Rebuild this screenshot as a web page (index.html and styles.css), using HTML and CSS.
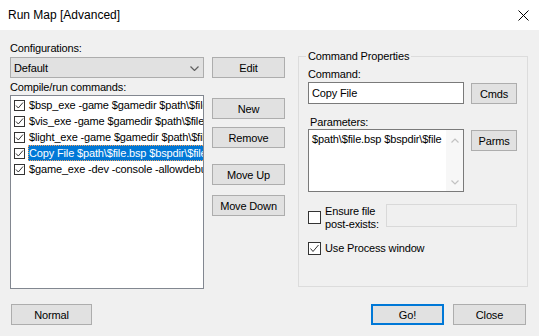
FILE: index.html
```html
<!DOCTYPE html>
<html>
<head>
<meta charset="utf-8">
<link rel="stylesheet" href="styles.css">
</head>
<body>
<div class="window">
  <div class="titlebar">
    <span class="title">Run Map [Advanced]</span>
    <svg class="close-x" width="11" height="11" viewBox="0 0 11 11"><path d="M0.5 0.5 L10.5 10.5 M10.5 0.5 L0.5 10.5" stroke="#000" stroke-width="1" fill="none"/></svg>
  </div>
  <div class="client">
    <div class="top">
      <div class="left">
        <div class="label">Configurations:</div>
        <div class="combo">
          <span>Default</span>
          <svg width="9" height="5" viewBox="0 0 9 5"><path d="M0.5 0.5 L4.5 4.5 L8.5 0.5" stroke="#606060" stroke-width="1.2" fill="none"/></svg>
        </div>
        <div class="label label-2">Compile/run commands:</div>
        <div class="listbox">
          <div class="row"><svg class="lcb" width="11" height="11" viewBox="0 0 11 11"><rect x="0.5" y="0.5" width="10" height="10" fill="#fff" stroke="#333"/><path d="M2 5.5 L4.3 8 L9 2.5" stroke="#333" stroke-width="1" fill="none"/></svg><span class="rt">$bsp_exe -game $gamedir $path\$file</span></div>
          <div class="row"><svg class="lcb" width="11" height="11" viewBox="0 0 11 11"><rect x="0.5" y="0.5" width="10" height="10" fill="#fff" stroke="#333"/><path d="M2 5.5 L4.3 8 L9 2.5" stroke="#333" stroke-width="1" fill="none"/></svg><span class="rt">$vis_exe -game $gamedir $path\$file</span></div>
          <div class="row"><svg class="lcb" width="11" height="11" viewBox="0 0 11 11"><rect x="0.5" y="0.5" width="10" height="10" fill="#fff" stroke="#333"/><path d="M2 5.5 L4.3 8 L9 2.5" stroke="#333" stroke-width="1" fill="none"/></svg><span class="rt">$light_exe -game $gamedir $path\$file</span></div>
          <div class="row"><svg class="lcb" width="11" height="11" viewBox="0 0 11 11"><rect x="0.5" y="0.5" width="10" height="10" fill="#fff" stroke="#333"/><path d="M2 5.5 L4.3 8 L9 2.5" stroke="#333" stroke-width="1" fill="none"/></svg><span class="rt sel">Copy File $path\$file.bsp $bspdir\$file</span></div>
          <div class="row"><svg class="lcb" width="11" height="11" viewBox="0 0 11 11"><rect x="0.5" y="0.5" width="10" height="10" fill="#fff" stroke="#333"/><path d="M2 5.5 L4.3 8 L9 2.5" stroke="#333" stroke-width="1" fill="none"/></svg><span class="rt">$game_exe -dev -console -allowdebug +map $file</span></div>
        </div>
      </div>
      <div class="mid">
        <div class="btn b-edit">Edit</div>
        <div class="btn b-new">New</div>
        <div class="btn b-remove">Remove</div>
        <div class="btn b-up">Move Up</div>
        <div class="btn b-down">Move Down</div>
      </div>
      <fieldset class="group">
        <legend>Command Properties</legend>
        <div class="label">Command:</div>
        <div class="frow">
          <div class="field">Copy File</div>
          <div class="btn side-btn">Cmds</div>
        </div>
        <div class="label label-params">Parameters:</div>
        <div class="frow">
          <div class="textarea">
            <div class="ta-text">$path\$file.bsp $bspdir\$file</div>
            <div class="ta-scroll">
              <svg width="8" height="5" viewBox="0 0 8 5"><path d="M0.5 4.5 L4 1 L7.5 4.5" stroke="#c2c2c2" stroke-width="1.2" fill="none"/></svg>
              <svg width="8" height="5" viewBox="0 0 8 5"><path d="M0.5 0.5 L4 4 L7.5 0.5" stroke="#c2c2c2" stroke-width="1.2" fill="none"/></svg>
            </div>
          </div>
          <div class="btn side-btn">Parms</div>
        </div>
        <div class="ensure">
          <svg class="cb" width="13" height="13" viewBox="0 0 13 13"><rect x="0.5" y="0.5" width="12" height="12" fill="#fff" stroke="#333"/></svg>
          <div class="ensure-label">Ensure file<br>post-exists:</div>
          <div class="disabled-field"></div>
        </div>
        <div class="useproc">
          <svg class="cb" width="13" height="13" viewBox="0 0 13 13"><rect x="0.5" y="0.5" width="12" height="12" fill="#fff" stroke="#333"/><path d="M2.5 6.5 L5 9.5 L10.5 3" stroke="#333" stroke-width="1" fill="none"/></svg>
          <span>Use Process window</span>
        </div>
      </fieldset>
    </div>
    <div class="bottom">
      <div class="btn b-normal">Normal</div>
      <div class="spacer"></div>
      <div class="btn b-go">Go!</div>
      <div class="btn b-close">Close</div>
    </div>
  </div>
</div>
</body>
</html>
```

FILE: styles.css
```css
* { box-sizing: border-box; }
html, body { margin: 0; padding: 0; }
body {
  width: 539px;
  height: 336px;
  background: #f0f0f0;
  font-family: "Liberation Sans", Arial, sans-serif;
  font-size: 11px;
  letter-spacing: -0.15px;
  color: #000;
  overflow: hidden;
}
.window { width: 539px; height: 336px; display: flex; flex-direction: column; }

.titlebar {
  height: 30px;
  background: #fff;
  display: flex;
  align-items: center;
  justify-content: space-between;
  padding: 0 10px 0 8px;
}
.title { font-size: 12px; line-height: 30px; letter-spacing: 0; }
.close-x { display: block; }

.client { display: flex; flex-direction: column; }

.top { display: flex; align-items: flex-start; padding-left: 10px; }

.label { line-height: 13px; height: 13px; white-space: nowrap; }

.left { width: 194px; padding-top: 12px; display: flex; flex-direction: column; }
.combo {
  margin-top: 2px;
  height: 21px;
  background: #e1e1e1;
  border: 1px solid #adadad;
  display: flex;
  align-items: center;
  justify-content: space-between;
  padding: 0 4px 0 3px;
}
.combo svg { display: block; margin-top: 1px; }
.label-2 { margin-top: 3px; }
.listbox {
  margin-top: 1px;
  height: 194px;
  background: #fff;
  border: 1px solid #828790;
  padding-top: 1px;
  overflow: hidden;
}
.row {
  height: 16px;
  display: flex;
  align-items: center;
  white-space: nowrap;
}
.lcb { display: block; flex: none; margin-left: 3px; margin-right: 3px; }
.rt { line-height: 16px; padding-left: 1px; padding-right: 2px; }
.rt.sel {
  background: #0078d7;
  color: #fff;
  outline: 1px dotted #f7a35c;
  outline-offset: -1px;
}

.mid { width: 73px; margin-left: 8px; padding-top: 27px; display: flex; flex-direction: column; }
.btn {
  height: 21px;
  background: #e1e1e1;
  border: 1px solid #adadad;
  display: flex;
  align-items: center;
  justify-content: center;
  white-space: nowrap;
}
.b-new { margin-top: 20px; }
.b-remove { margin-top: 8px; }
.b-up { margin-top: 16px; }
.b-down { margin-top: 10px; }

.group {
  margin: 20px 0 0 13px;
  width: 230px;
  height: 237px;
  border: 1px solid #dcdcdc;
  padding: 6px 10px 0 9px;
  min-width: 0;
}
.group legend {
  padding: 0 2px;
  margin-left: -2px;
  line-height: 12px;
  font-size: 11px;
}
.frow { display: flex; align-items: flex-start; margin-top: 1px; }
.field {
  width: 156px;
  height: 22px;
  background: #fff;
  border: 1px solid #7a7a7a;
  padding: 0 3px;
  line-height: 20px;
}
.side-btn { width: 46px; margin-left: 7px; margin-top: 1px; }
.label-params { margin-top: 12px; padding-left: 2px; }
.label-params + .frow { margin-top: 0; }
.textarea {
  width: 156px;
  height: 63px;
  background: #fff;
  border: 1px solid #7a7a7a;
  display: flex;
}
.ta-text { flex: 1; padding: 3px 0 0 3px; line-height: 13px; white-space: nowrap; overflow: hidden; }
.ta-scroll {
  width: 17px;
  background: #f7f7f7;
  display: flex;
  flex-direction: column;
  justify-content: space-between;
  align-items: center;
  padding: 8px 0 6px;
}
.ta-scroll svg { display: block; }

.ensure { display: flex; align-items: center; margin-top: 12px; height: 27px; }
.cb { display: block; flex: none; }
.ensure-label { margin-left: 4px; line-height: 13px; width: 58px; margin-top: 1px; }
.disabled-field {
  width: 133px;
  height: 23px;
  border: 1px solid #d9d9d9;
  background: #f0f0f0;
  margin-left: 4px;
  align-self: flex-start;
}
.useproc { display: flex; align-items: center; margin-top: 11px; height: 13px; }
.useproc span { margin-left: 4px; line-height: 13px; }

.bottom { display: flex; margin-top: 15px; padding: 0 13px 0 11px; }
.b-normal { width: 81px; }
.spacer { flex: 1; }
.b-go { width: 73px; border: 2px solid #0078d7; }
.b-close { width: 73px; margin-left: 9px; }
```
